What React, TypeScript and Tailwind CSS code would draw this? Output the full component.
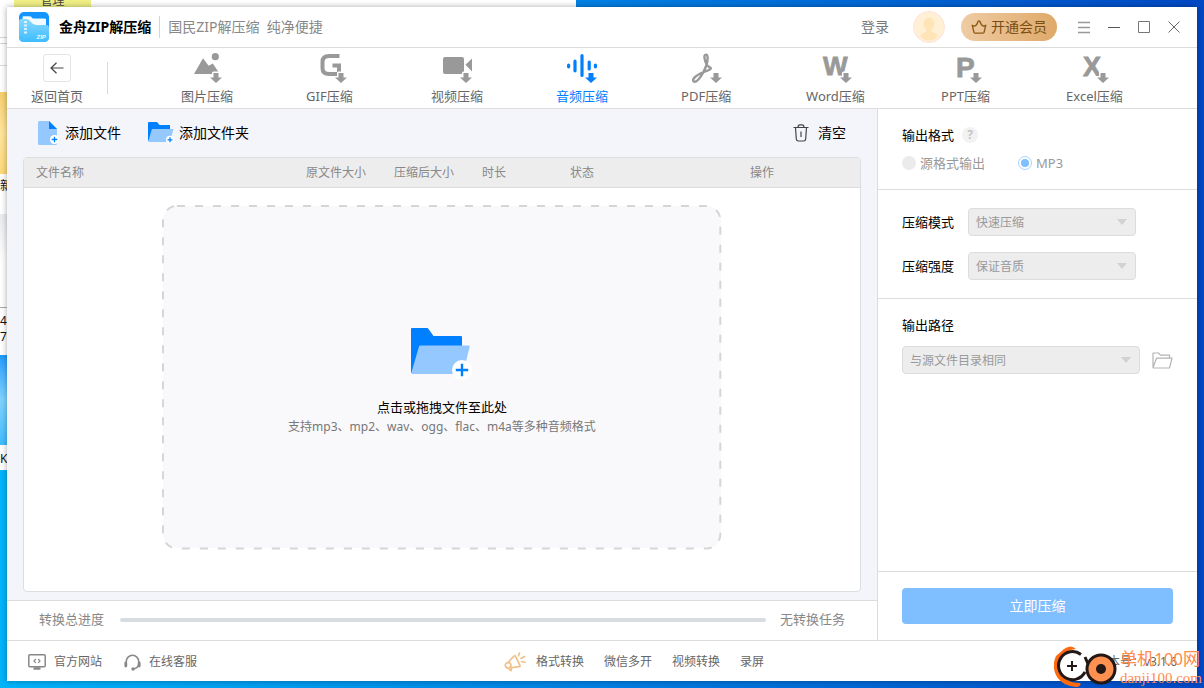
import type { ReactNode } from "react";

type Tab = {
  label: string;
  icon: ReactNode;
  active?: boolean;
  wide?: boolean;
};

const Letter = (props: { children: string; x: number; y?: number; size?: number }) => (
  <text
    x={props.x}
    y={props.y ?? 25}
    fontFamily="Liberation Sans, sans-serif"
    fontWeight="bold"
    fontSize={props.size ?? 27}
    fill="currentColor"
    stroke="currentColor"
    strokeWidth="0.8"
  >
    {props.children}
  </text>
);

// every tab icon has the same small "shrink" arrow in the corner
const TabIcon = ({ children }: { children: ReactNode }) => (
  <svg width="30" height="32" viewBox="0 0 30 32" fill="currentColor">
    {children}
    <path
      d="M21.5 21h5v4.500H30l-6 5.500-6-5.500h3.500z"
      stroke="#fff"
      strokeWidth="3"
      strokeLinejoin="round"
      paintOrder="stroke"
    />
  </svg>
);

const tabs: Tab[] = [
  {
    label: "图片压缩",
    icon: (
      <>
        <circle cx="23.3" cy="4.7" r="3.6" />
        <path d="M2 22 11 6.2l5.6 7.6 4.2-2.4L26.5 20v2z" />
      </>
    ),
  },
  {
    label: "GIF压缩",
    icon: (
      <path
        d="M22.500 4H12Q5.500 4 5.500 10v6q0 6 6.500 6h10V13.500H15.500"
        fill="none"
        stroke="currentColor"
        strokeWidth="4"
      />
    ),
  },
  {
    label: "视频压缩",
    icon: (
      <>
        <rect x="1" y="5" width="21" height="17" rx="2" />
        <path d="m30 6.5-6.5 6.3L30 19.5z" />
      </>
    ),
  },
  {
    label: "音频压缩",
    active: true,
    icon: (
      <path
        d="M1.6 13.200v1.600M8 9.200v9.600M15 3.500v20M22.200 10v7M28.400 13.200v1.600"
        stroke="currentColor"
        strokeWidth="3.2"
        strokeLinecap="round"
      />
    ),
  },
  {
    label: "PDF压缩",
    icon: (
      <path
        d="M15.2 13.5C12 7.5 11.6 2.5 13.9 2.6c2.5.1 2.1 6.2.2 11.4C11.500 21 6.500 29.500 2.800 29.700-.8 29.500 1.500 25 7 22.200c5-2.600 9-3.400 11-5M15.200 13.500c1.400 1.800 4.200 1.500 3.500 3.200"
        fill="none"
        stroke="currentColor"
        strokeWidth="2.4"
        strokeLinecap="round"
      />
    ),
  },
  { label: "Word压缩", wide: true, icon: <Letter x={1} y={23} size={26}>W</Letter> },
  { label: "PPT压缩", icon: <Letter x={4} y={25} size={28}>P</Letter> },
  { label: "Excel压缩", icon: <Letter x={4} y={24} size={27}>X</Letter> },
];

const Logo = () => (
  <svg width="30" height="30" viewBox="0 0 30 30">
    <defs>
      <linearGradient id="logoFront" x1="0" y1="0" x2="0" y2="1">
        <stop offset="0" stopColor="#86d8ff" />
        <stop offset="1" stopColor="#3ebcff" />
      </linearGradient>
    </defs>
    <rect width="30" height="30" rx="5" fill="#1596ff" />
    <path d="M3 6q0-2 2-2h5l2 2h13q2 0 2 2v8H3z" fill="#6fc9ff" />
    <path d="M4 4.500h8l2 2.500h13v10H4z" fill="#fff" opacity=".9" />
    <path d="M0 9q0-2 2-2h5q3 0 5 3t5 3h10q3 0 3 3v9q0 5-5 5H5q-5 0-5-5z" fill="url(#logoFront)" />
    <path d="M6.500 9v13" stroke="#d8f3ff" strokeWidth="3" strokeDasharray="2 1.500" />
    <text x="17.500" y="26.500" fontFamily="Liberation Sans, sans-serif" fontWeight="bold" fontStyle="italic" fontSize="6" fill="#eefaff">
      ZIP
    </text>
  </svg>
);

const PlusBadge = (props: { cx: number; cy: number; r: number; w: number }) => {
  const { cx, cy, r, w } = props;
  const a = r * 0.62;
  return (
    <>
      <circle cx={cx} cy={cy} r={r} fill="#fff" />
      <path d={`M${cx - a} ${cy}h${a * 2}M${cx} ${cy - a}v${a * 2}`} stroke="#0080ff" strokeWidth={w} />
    </>
  );
};

const FileIcon = () => (
  <svg width="21" height="26" viewBox="0 0 21 26">
    <path d="M1.500 1H11l8 8v14.500q0 1.500-1.500 1.500h-16Q0 25 0 23.500v-21Q0 1 1.500 1z" fill="#94c8ff" />
    <path d="m11 1 8 8h-8z" fill="#0080ff" />
    <PlusBadge cx={16.500} cy={19.500} r={4.500} w={1.300} />
  </svg>
);

const FolderIcon = () => (
  <svg width="26" height="24" viewBox="0 0 26 24">
    <path d="M1 1h8l2.500 3H22v5L0 20V2q0-1 1-1z" fill="#0080ff" />
    <path d="M4 8h21.500L22 21H1q-1 0-.700-1z" fill="#94c8ff" />
    <PlusBadge cx={22} cy={18.800} r={4} w={1.300} />
  </svg>
);

const BigFolderIcon = () => (
  <svg width="61" height="54" viewBox="0 0 61 54">
    <path d="M1 1h15q1 0 1.500 1l5 7H50q1 0 1 1v12L1 46q-1 0-1-1V2q0-1 1-1z" fill="#0080ff" />
    <path d="M9 18.500h49q1 0 .700 1L52 47H1.500Q0 47 .400 45.500L8 19.500q.200-1 1-1z" fill="#94c8ff" />
    <PlusBadge cx={51} cy={43} r={10} w={2.400} />
  </svg>
);

const TrashIcon = () => (
  <svg width="16" height="18" viewBox="0 0 16 18" fill="none" stroke="#444" strokeWidth="1.200">
    <path d="M.5 3.500h15M5 3.500Q5 .800 7 .800h2q2 0 2 2.700M2.500 3.500l.800 11.500q.200 2 2 2h5.400q1.800 0 2-2l.800-11.500M8 7.500v5.500" />
  </svg>
);

const ArrowLeft = () => (
  <svg width="14" height="12" viewBox="0 0 14 12" fill="none" stroke="#444" strokeWidth="1.200">
    <path d="M13.500 6H1M6.500.700 1 6l5.500 5.300" />
  </svg>
);

const CrownIcon = () => (
  <svg width="16" height="14" viewBox="0 0 16 14" fill="none" stroke="#8a5a16" strokeWidth="1.300" strokeLinejoin="round">
    <path d="M1.200 5.200q2.400 1.600 3.800 0Q6.600 3.500 7 1.500q1-1.400 2 0 .400 2 2 3.700 1.400 1.600 3.800 0L13 12.500q-.300.700-1 .7H4q-.700 0-1-.7z" />
  </svg>
);

const Avatar = () => (
  <svg width="32" height="32" viewBox="0 0 32 32">
    <circle cx="16" cy="16" r="15.500" fill="#fff0d6" stroke="#ffe2dc" />
    <ellipse cx="16" cy="13" rx="5.500" ry="6.500" fill="#ffe4b8" />
    <path d="M13.500 17h5v3.500q4.500 1 6.500 4.500-4 4.500-9 4.500T7 25q2-3.500 6.500-4.500z" fill="#ffe4b8" />
  </svg>
);

const OpenFolderIcon = () => (
  <svg width="21" height="17" viewBox="0 0 21 17" fill="none" stroke="#b4b4b4" strokeWidth="1.200" strokeLinejoin="round">
    <path d="M1 15.500V1h5.500l2 2.200h9V6M1 15.500 4.500 6.200H20l-2.500 9.800H1.500z" />
  </svg>
);

const MonitorIcon = () => (
  <svg width="18" height="16" viewBox="0 0 18 16" fill="none" stroke="#888">
    <rect x=".8" y=".8" width="16.400" height="12" rx="1" strokeWidth="1.500" />
    <path d="M7.800 5 6 6.900l1.800 1.900M10.200 5 12 6.900l-1.800 1.900" strokeWidth="1.200" />
    <path d="M5.500 14.500h7" strokeWidth="2.500" />
  </svg>
);

const HeadsetIcon = () => (
  <svg width="17" height="17" viewBox="0 0 17 17" fill="none" stroke="#888">
    <path d="M2.300 9V7.500a6.200 6.200 0 0 1 12.400 0V9q0 4.800-5 6" strokeWidth="1.500" />
    <path d="M1.800 9v3M15.200 9v3" strokeWidth="2.800" strokeLinecap="round" />
    <circle cx="9" cy="15" r="1.700" fill="#888" stroke="none" />
  </svg>
);

const MegaphoneIcon = () => (
  <svg width="22" height="20" viewBox="0 0 22 20" fill="none" stroke="#f0bf85" strokeWidth="1.600" strokeLinecap="round" strokeLinejoin="round">
    <path d="M4 10.500 10 4q.800-.700 1.500.300l4.500 9q.400 1.200-.8 1.300L7 15.800M4 10.500q-3 .500-2.700 3.200.7 2.500 3.200 2.300 2.500-.2 2.500-2.700T4 10.500M4.500 16.500l2.500 2.200.800-3M14.500 3.700 15.500 1M17 6.500l3.500-2M17.500 9.500l3.500.7" />
  </svg>
);

const Caret = () => (
  <svg
    className="pointer-events-none absolute top-1/2 right-2 -translate-y-1/2"
    width="12"
    height="6"
    viewBox="0 0 12 6"
    fill="#d2d2d2"
  >
    <path d="M1 0h10L6 6z" />
  </svg>
);

const Select = (props: { id: string; value: string }) => (
  <div className="relative flex-1">
    <select
      id={props.id}
      disabled
      className="h-7 w-full appearance-none rounded border border-[#dcdcdc] bg-[#ededed] pt-[2px] pl-[7px] text-xs text-[#999] opacity-100"
    >
      <option>{props.value}</option>
    </select>
    <Caret />
  </div>
);

// explorer window sitting behind, only its edges are visible
const BackWindow = () => (
  <div className="absolute top-0 left-0 h-[470px] w-[576px] overflow-hidden bg-white" aria-hidden="true">
    <div className="ml-[14px] flex h-[7px] w-[77px] items-end justify-center bg-[#f0ef85] text-xs leading-3 text-[#444]">
      管理
    </div>
    <div className="mt-[30px] h-[7px] w-[7px] border-y border-[#d5d5d5]" />
    <div className="mt-[21px] h-px w-[7px] bg-[#ddd]" />
    <div className="mt-[26px] h-[82px] w-[7px] bg-linear-to-b from-[#f6cf6d] via-[#ffe59c] to-[#fdd978]" />
    <div className="mt-1 h-4 w-[100px] text-xs leading-4 text-[#111]">新</div>
    <div className="mt-5 h-[94px] w-[7px] border-b border-[#aaa] bg-linear-to-b from-[#e9ebef] via-white to-white" />
    <div className="mt-[5px] h-[34px] text-xs leading-4 text-[#111]">
      4<br />7
    </div>
    <div className="mt-2 h-[90px] w-[7px] bg-linear-to-b from-[#1b9cff] via-[#7fd3ff] to-[#3ebcff]" />
    <div className="mt-1 text-xs leading-5 text-[#111]">K</div>
  </div>
);

const TitleBar = () => (
  <header className="flex h-[41px] items-center border-b border-[#dcdcdc] pr-2 pl-3">
    <Logo />
    <h1 className="ml-[10px] text-sm font-bold text-black">金舟ZIP解压缩</h1>
    <span className="mx-2 h-[22px] w-px bg-[#d5d5d5]" />
    <p className="text-sm whitespace-pre text-[#888]">国民ZIP解压缩  纯净便捷</p>
    <button type="button" className="ml-auto text-sm text-[#777]">
      登录
    </button>
    <button type="button" aria-label="头像" className="ml-6">
      <Avatar />
    </button>
    <button
      type="button"
      className="mr-3 ml-4 flex h-7 w-24 items-center justify-center gap-1 rounded-full bg-linear-to-r from-[#efcba4] to-[#dfa968] text-sm text-[#7a4e12]"
    >
      <CrownIcon />
      开通会员
    </button>
    <button type="button" aria-label="菜单" className="flex w-[30px] justify-center">
      <svg width="12" height="13" stroke="#999" strokeWidth="1.500">
        <path d="M0 1.500h12M0 6.500h12M0 11.500h12" />
      </svg>
    </button>
    <button type="button" aria-label="最小化" className="flex w-[30px] justify-center">
      <svg width="12" height="12" stroke="#555">
        <path d="M0 6.500h12" />
      </svg>
    </button>
    <button type="button" aria-label="最大化" className="flex w-[30px] justify-center">
      <svg width="12" height="12" stroke="#777" fill="none">
        <path d="M.5.5h11v11H.5z" />
      </svg>
    </button>
    <button type="button" aria-label="关闭" className="flex w-[30px] justify-center">
      <svg width="12" height="12" stroke="#666">
        <path d="m.5.5 11 11M11.500.5l-11 11" />
      </svg>
    </button>
  </header>
);

const TabBar = () => (
  <nav className="flex h-[61px] items-start border-b border-[#dcdcdc] pt-1">
    <button type="button" className="ml-6 flex w-[52px] flex-col items-center text-[13px] leading-5 text-[#666]">
      <span className="mt-[2px] mb-1 flex h-7 w-7 items-center justify-center rounded-[3px] border border-[#e5e5e5]">
        <ArrowLeft />
      </span>
      返回首页
    </button>
    <span className="mt-[10px] ml-6 h-8 w-px bg-[#dcdcdc]" />
    <div className="ml-[73px] flex gap-[73px]">
      {tabs.map((tab) => (
        <button
          key={tab.label}
          type="button"
          className={`flex flex-col items-center text-[13px] leading-5 ${tab.wide ? "min-w-[62px]" : "min-w-[52px]"} ${
            tab.active ? "text-[#0080ff]" : "text-[#666]"
          }`}
        >
          <span className={`mb-[2px] ${tab.active ? "text-[#0080ff]" : "text-[#999]"}`}>
            <TabIcon>{tab.icon}</TabIcon>
          </span>
          <span className="w-full text-left whitespace-nowrap">{tab.label}</span>
        </button>
      ))}
    </div>
  </nav>
);

const DropArea = () => (
  <button
    type="button"
    className="relative mx-auto mt-[18px] mb-[43px] flex w-2/3 flex-1 flex-col items-center justify-center rounded-[14px] bg-[#f9f9fc] pt-[10px]"
  >
    <svg className="absolute inset-0 h-full w-full overflow-visible" fill="none">
      <rect width="100%" height="100%" rx="14" stroke="#d6d6d6" strokeWidth="2" strokeDasharray="8 10" />
    </svg>
    <BigFolderIcon />
    <span className="mt-4 text-[13px] leading-5 text-black">点击或拖拽文件至此处</span>
    <span className="text-xs leading-5 text-[#777]">支持mp3、mp2、wav、ogg、flac、m4a等多种音频格式</span>
  </button>
);

const FilePanel = () => (
  <main className="flex flex-1 flex-col">
    <div className="flex flex-1 flex-col bg-[#f4f5fa] px-4 pb-2">
      <div className="flex h-12 items-center pr-[15px] pl-[15px] text-sm text-black">
        <button type="button" className="flex items-center gap-[6px]">
          <FileIcon />
          添加文件
        </button>
        <button type="button" className="ml-[27px] flex items-center gap-[5px]">
          <FolderIcon />
          添加文件夹
        </button>
        <button type="button" className="ml-auto flex items-center gap-[9px]">
          <TrashIcon />
          清空
        </button>
      </div>
      <section className="flex flex-1 flex-col overflow-hidden rounded border border-[#dcdfe0] bg-white">
        <table className="w-full table-fixed text-left text-xs text-[#888]">
          <thead>
            <tr className="h-[29px] border-b border-[#dcdcdc] bg-[#ededed]">
              <th className="w-[270px] px-3 pt-[2px] font-normal">文件名称</th>
              <th className="w-[88px] px-3 pt-[2px] font-normal">原文件大小</th>
              <th className="w-[88px] px-3 pt-[2px] font-normal">压缩后大小</th>
              <th className="w-[88px] px-3 pt-[2px] font-normal">时长</th>
              <th className="w-[180px] px-3 pt-[2px] font-normal">状态</th>
              <th className="px-3 pt-[2px] font-normal">操作</th>
            </tr>
          </thead>
        </table>
        <DropArea />
      </section>
    </div>
    <div className="flex h-10 items-center border-t border-[#dcdcdc] px-8 pb-[2px] text-[13px] text-[#888]">
      <span id="progress-label">转换总进度</span>
      <div
        role="progressbar"
        aria-labelledby="progress-label"
        aria-valuenow={0}
        className="mr-[14px] ml-4 h-1 flex-1 rounded-full bg-[#d8dde2]"
      />
      <span>无转换任务</span>
    </div>
  </main>
);

const radioClass = "h-[14px] w-[14px] appearance-none rounded-full";

const SettingsPanel = () => (
  <aside className="flex w-80 shrink-0 flex-col border-l border-[#dcdcdc] text-[13px] leading-5 text-black">
    <fieldset className="h-[81px] border-b border-[#dcdcdc] px-6 pt-4">
      <div className="flex items-center gap-2">
        <span>输出格式</span>
        <button type="button" aria-label="帮助" className="h-4 w-4 rounded-full bg-[#f2f2f2] text-xs leading-4 font-bold text-[#c4c4c4]">
          ?
        </button>
      </div>
      <div className="mt-2 flex items-center text-[#999]">
        <label className="flex w-[116px] items-center gap-1">
          <input type="radio" name="format" disabled className={`${radioClass} bg-[#ebebeb]`} />
          源格式输出
        </label>
        <label className="flex items-center gap-1">
          <input
            type="radio"
            name="format"
            defaultChecked
            disabled
            className={`${radioClass} border border-[#a9d2ff] bg-[#80bfff] bg-clip-content p-[2px]`}
          />
          MP3
        </label>
      </div>
    </fieldset>
    <section className="flex h-[109px] flex-col gap-4 border-b border-[#dcdcdc] pt-[18px] pr-[61px] pl-6">
      <div className="flex items-center gap-[14px]">
        <label htmlFor="mode">压缩模式</label>
        <Select id="mode" value="快速压缩" />
      </div>
      <div className="flex items-center gap-[14px]">
        <label htmlFor="strength">压缩强度</label>
        <Select id="strength" value="保证音质" />
      </div>
    </section>
    <section className="flex-1 px-6 pt-4">
      <label htmlFor="path">输出路径</label>
      <div className="mt-[11px] flex items-center gap-3">
        <Select id="path" value="与源文件目录相同" />
        <button type="button" aria-label="打开目录">
          <OpenFolderIcon />
        </button>
      </div>
    </section>
    <div className="h-[69px] border-t border-[#dcdcdc] px-6 pt-4">
      <button type="button" className="h-9 w-full rounded bg-[#80bfff] text-sm text-white">
        立即压缩
      </button>
    </div>
  </aside>
);

const Footer = () => (
  <footer className="flex h-[41px] items-center border-t border-[#dcdcdc] pt-[2px] pr-5 pl-[21px] text-xs text-[#666]">
    <div className="flex w-[476px] items-center">
      <a href="#site" className="flex items-center gap-2">
        <MonitorIcon />
        官方网站
      </a>
      <a href="#service" className="ml-[22px] flex items-center gap-2">
        <HeadsetIcon />
        在线客服
      </a>
    </div>
    <div className="flex items-center gap-[10px]">
      <MegaphoneIcon />
      <div className="flex gap-5">
        <a href="#format">格式转换</a>
        <a href="#wechat">微信多开</a>
        <a href="#video">视频转换</a>
        <a href="#record">录屏</a>
      </div>
    </div>
    <span className="ml-auto">版本号：v3.1.6</span>
  </footer>
);

const Watermark = () => (
  <div className="pointer-events-none absolute right-[2px] bottom-0 flex h-[43px] items-center gap-[2px] text-[#ff8c4a]">
    <svg width="64" height="43" viewBox="0 0 64 43">
      <circle cx="18" cy="21" r="15" fill="#fff" />
      <path d="M22 4Q17-1 10 4L2 11Q-3 22 3 32q6 9 19 10 6-1 4-4-14 0-20-10-4-11 2-18 5-5 14-6z" fill="#ff6a10" />
      <path d="M27 9.500A14 14 0 1 0 31 27" fill="none" stroke="#231815" strokeWidth="3" />
      <path d="M13 21h10M18 16v10" stroke="#231815" strokeWidth="2" />
      <path d="m31 12 4 9 5-8" fill="none" stroke="#231815" strokeWidth="3" />
      <circle cx="47" cy="24" r="14" fill="#ff9150" stroke="#231815" strokeWidth="3" />
      <circle cx="47" cy="24" r="5" fill="#231815" />
    </svg>
    <div>
      <p className="text-[17px] leading-[22px] whitespace-nowrap">单机100网</p>
      <p className="font-['Liberation_Serif','Noto_Sans_CJK_SC',serif] text-[15px] leading-[16px]">danji100.com</p>
    </div>
  </div>
);

const App = () => {
  return (
    <div className="relative flex min-h-screen overflow-hidden bg-linear-to-r from-[#00b4fa] via-[#007fe2] to-[#0048c4] p-[7px] font-['Noto_Sans','Noto_Sans_CJK_SC',sans-serif]">
      <BackWindow />
      <div className="relative flex flex-1 flex-col bg-white shadow-[0_0_6px_rgba(0,0,0,0.35)]">
        <TitleBar />
        <TabBar />
        <div className="flex flex-1">
          <FilePanel />
          <SettingsPanel />
        </div>
        <Footer />
      </div>
      <Watermark />
    </div>
  );
};

export default App;
